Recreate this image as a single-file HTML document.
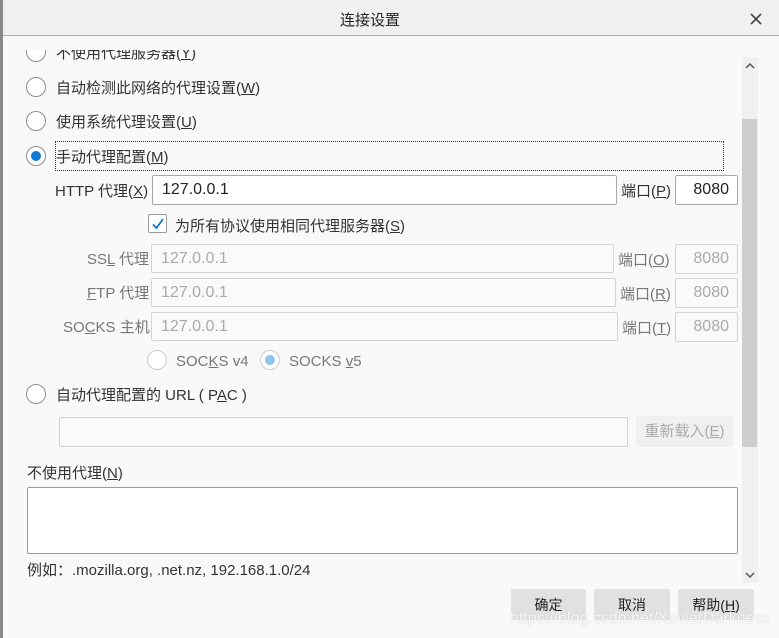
<!DOCTYPE html>
<html><head><meta charset="utf-8"><style>
*{box-sizing:border-box;margin:0;padding:0}
body{width:779px;height:638px;overflow:hidden;background:#f9f9f9;font-family:"Liberation Sans","Noto Sans CJK SC",sans-serif;font-size:15px;color:#333;position:relative}
.a{position:absolute;white-space:nowrap}
.t{line-height:20px;padding-top:2px}
.r{position:absolute;width:20px;height:20px;border:1px solid #8f8f8f;border-radius:50%;background:#fff}
.r.on::after{content:"";position:absolute;left:4px;top:4px;width:10px;height:10px;border-radius:50%;background:#0c7ad4}
.in{position:absolute;background:#fff;border:1px solid #a8a8a8;border-radius:2px;padding-left:9px;line-height:28px;font-size:16px;color:#222}
.dis{background:#fafafa;border-color:#d4d4d4;color:#aaa}
.g{color:#777}
u{text-decoration:underline}
.btn{position:absolute;background:#e1e1e1;border-radius:2px;text-align:center;line-height:32px;font-size:14px;color:#222}
</style></head><body>
<div class="a" style="left:0;top:0;width:3px;height:638px;background:#888"></div>
<div class="a" style="left:3px;top:0;width:776px;height:36px;background:#f0f0f0;border-bottom:1px solid #b0b0b0"></div>
<div class="a t" style="left:340px;top:9px;font-size:15px;color:#222">连接设置</div>
<svg class="a" style="left:750px;top:13px" width="12" height="12"><path d="M1 1L11 11M11 1L1 11" stroke="#444" stroke-width="1.6"/></svg>
<div class="a" style="left:3px;top:50px;width:738px;height:13px;overflow:hidden">
 <div class="r" style="left:23px;top:-8px"></div>
 <div class="a t" style="left:53px;top:-8px">不使用代理服务器(<u>Y</u>)</div>
</div>
<div class="r" style="left:26px;top:77px"></div><div class="a t" style="left:56px;top:77px">自动检测此网络的代理设置(<u>W</u>)</div>
<div class="r" style="left:26px;top:111px"></div><div class="a t" style="left:56px;top:111px">使用系统代理设置(<u>U</u>)</div>
<div class="r on" style="left:26px;top:146px"></div>
<div class="a" style="left:55px;top:141px;width:669px;height:30px;border:1px dotted #333"></div>
<div class="a t" style="left:56px;top:146px">手动代理配置(<u>M</u>)</div>

<div class="a t" style="left:55px;top:180px">HTTP 代理(<u>X</u>)</div>
<div class="in" style="left:152px;top:175px;width:465px;height:30px">127.0.0.1</div>
<div class="a t" style="left:621px;top:180px">端口(<u>P</u>)</div>
<div class="in" style="left:675px;top:175px;width:63px;height:30px;text-align:right;padding-right:8px">8080</div>

<div class="a" style="left:148px;top:214px;width:19px;height:19px;border:1px solid #999;border-radius:2px;background:#fff"></div>
<svg class="a" style="left:150px;top:216px" width="16" height="16"><path d="M3 8.5L6.5 12L13 3" stroke="#0c7ad4" stroke-width="1.8" fill="none"/></svg>
<div class="a t" style="left:175px;top:215px">为所有协议使用相同代理服务器(<u>S</u>)</div>

<div class="a t g" style="left:87px;top:248px">SS<u>L</u> 代理</div>
<div class="in dis" style="left:151px;top:244px;width:463px;height:29px">127.0.0.1</div>
<div class="a t g" style="left:618px;top:249px">端口(<u>O</u>)</div>
<div class="in dis" style="left:675px;top:244px;width:63px;height:30px;text-align:right;padding-right:8px">8080</div>

<div class="a t g" style="left:87px;top:282px"><u>F</u>TP 代理</div>
<div class="in dis" style="left:151px;top:278px;width:465px;height:29px">127.0.0.1</div>
<div class="a t g" style="left:620px;top:283px">端口(<u>R</u>)</div>
<div class="in dis" style="left:675px;top:278px;width:63px;height:30px;text-align:right;padding-right:8px">8080</div>

<div class="a t g" style="left:63px;top:316px">SO<u>C</u>KS 主机</div>
<div class="in dis" style="left:151px;top:312px;width:467px;height:29px">127.0.0.1</div>
<div class="a t g" style="left:622px;top:317px">端口(<u>T</u>)</div>
<div class="in dis" style="left:675px;top:312px;width:63px;height:30px;text-align:right;padding-right:8px">8080</div>

<div class="r" style="left:147px;top:350px;border-color:#ccc"></div><div class="a t g" style="left:176px;top:350px">SOC<u>K</u>S v4</div>
<div class="r" style="left:260px;top:350px;border-color:#ccc"><div style="position:absolute;left:4px;top:4px;width:10px;height:10px;border-radius:50%;background:#8cc5ea"></div></div><div class="a t g" style="left:289px;top:350px">SOCKS <u>v</u>5</div>

<div class="r" style="left:26px;top:384px"></div><div class="a t" style="left:56px;top:384px">自动代理配置的 URL ( P<u>A</u>C )</div>
<div class="in dis" style="left:59px;top:417px;width:569px;height:30px"></div>
<div class="btn" style="left:636px;top:416px;width:97px;height:31px;background:#f0f0f0;color:#aaa;font-size:15px">重新载入(<u>E</u>)</div>

<div class="a t" style="left:27px;top:462px">不使用代理(<u>N</u>)</div>
<div class="a" style="left:27px;top:487px;width:711px;height:67px;border:1px solid #999;background:#fff;border-radius:2px"></div>
<div class="a t" style="left:27px;top:559px">例如：.mozilla.org, .net.nz, 192.168.1.0/24</div>

<div class="a" style="left:742px;top:57px;width:16px;height:526px;background:#f0f0f0"></div>
<div class="a" style="left:742px;top:119px;width:15px;height:328px;background:#cdcdcd"></div>
<svg class="a" style="left:745px;top:62px" width="10" height="8"><path d="M1 6L5 2L9 6" stroke="#555" stroke-width="1.5" fill="none"/></svg>
<svg class="a" style="left:745px;top:571px" width="10" height="8"><path d="M1 2L5 6L9 2" stroke="#555" stroke-width="1.5" fill="none"/></svg>

<div class="btn" style="left:511px;top:589px;width:75px;height:31px">确定</div>
<div class="btn" style="left:594px;top:589px;width:76px;height:31px">取消</div>
<div class="btn" style="left:678px;top:589px;width:76px;height:31px">帮助(<u>H</u>)</div>
<div class="a" style="left:510px;top:610px;font-size:16px;color:rgba(255,255,255,.85);text-shadow:0 0 1px #bbb">https://blog.csdn.net/XavierDarkness</div>
</body></html>
